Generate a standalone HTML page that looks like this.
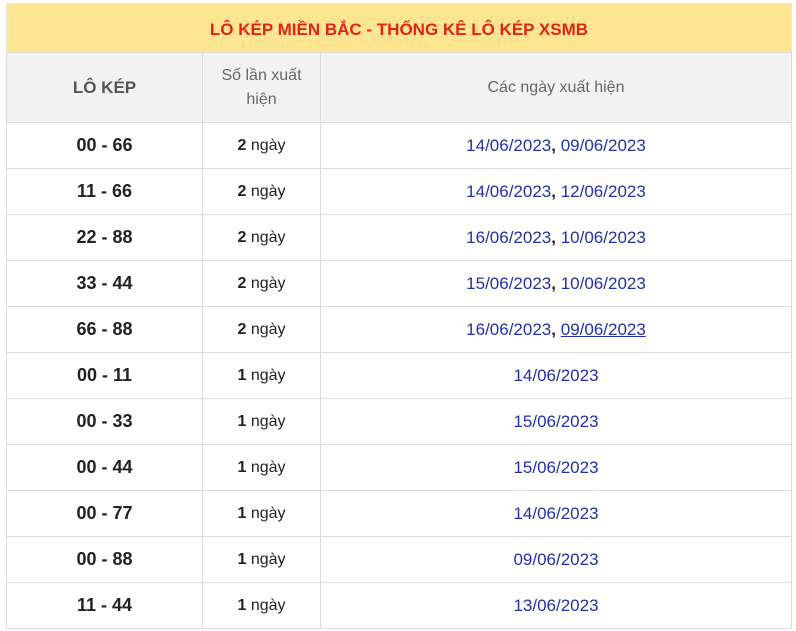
<!DOCTYPE html>
<html><head><meta charset="utf-8"><style>
body{margin:0;background:#fff;font-family:"Liberation Sans",Arial,sans-serif;}
.t{position:absolute;left:6px;top:3px;width:786px;}
.title{height:49px;background:#fde592;color:#e2231a;font-weight:bold;font-size:17px;text-align:center;line-height:51px;border:1px solid #e8e8e8;border-bottom:none;box-sizing:border-box;}
table{border-collapse:collapse;width:786px;table-layout:fixed;}
td{border:1px solid #dcdcdc;text-align:center;padding:0;height:45px;font-size:16px;color:#222;}
th{border:1px solid #dcdcdc;background:#f2f2f2;height:69px;font-weight:normal;color:#666;font-size:16px;line-height:24px;padding:0;}
th.b{font-weight:bold;font-size:17px;color:#555;}
td.l{font-weight:bold;font-size:18px;color:#222;}
td.d{color:#2231a8;font-size:17px;}
td.d b{color:#222;}
u{text-decoration:underline;}
</style></head><body>
<div class="t">
<div class="title">LÔ KÉP MIỀN BẮC - THỐNG KÊ LÔ KÉP XSMB</div>
<table>
<col style="width:196px"><col style="width:118px"><col>
<tr><th class="b">LÔ KÉP</th><th>Số lần xuất<br>hiện</th><th>Các ngày xuất hiện</th></tr>
<tr><td class="l">00 - 66</td><td><b>2</b> ngày</td><td class="d">14/06/2023<b>,</b> 09/06/2023</td></tr>
<tr><td class="l">11 - 66</td><td><b>2</b> ngày</td><td class="d">14/06/2023<b>,</b> 12/06/2023</td></tr>
<tr><td class="l">22 - 88</td><td><b>2</b> ngày</td><td class="d">16/06/2023<b>,</b> 10/06/2023</td></tr>
<tr><td class="l">33 - 44</td><td><b>2</b> ngày</td><td class="d">15/06/2023<b>,</b> 10/06/2023</td></tr>
<tr><td class="l">66 - 88</td><td><b>2</b> ngày</td><td class="d">16/06/2023<b>,</b> <u>09/06/2023</u></td></tr>
<tr><td class="l">00 - 11</td><td><b>1</b> ngày</td><td class="d">14/06/2023</td></tr>
<tr><td class="l">00 - 33</td><td><b>1</b> ngày</td><td class="d">15/06/2023</td></tr>
<tr><td class="l">00 - 44</td><td><b>1</b> ngày</td><td class="d">15/06/2023</td></tr>
<tr><td class="l">00 - 77</td><td><b>1</b> ngày</td><td class="d">14/06/2023</td></tr>
<tr><td class="l">00 - 88</td><td><b>1</b> ngày</td><td class="d">09/06/2023</td></tr>
<tr><td class="l">11 - 44</td><td><b>1</b> ngày</td><td class="d">13/06/2023</td></tr>
</table></div>
</body></html>
